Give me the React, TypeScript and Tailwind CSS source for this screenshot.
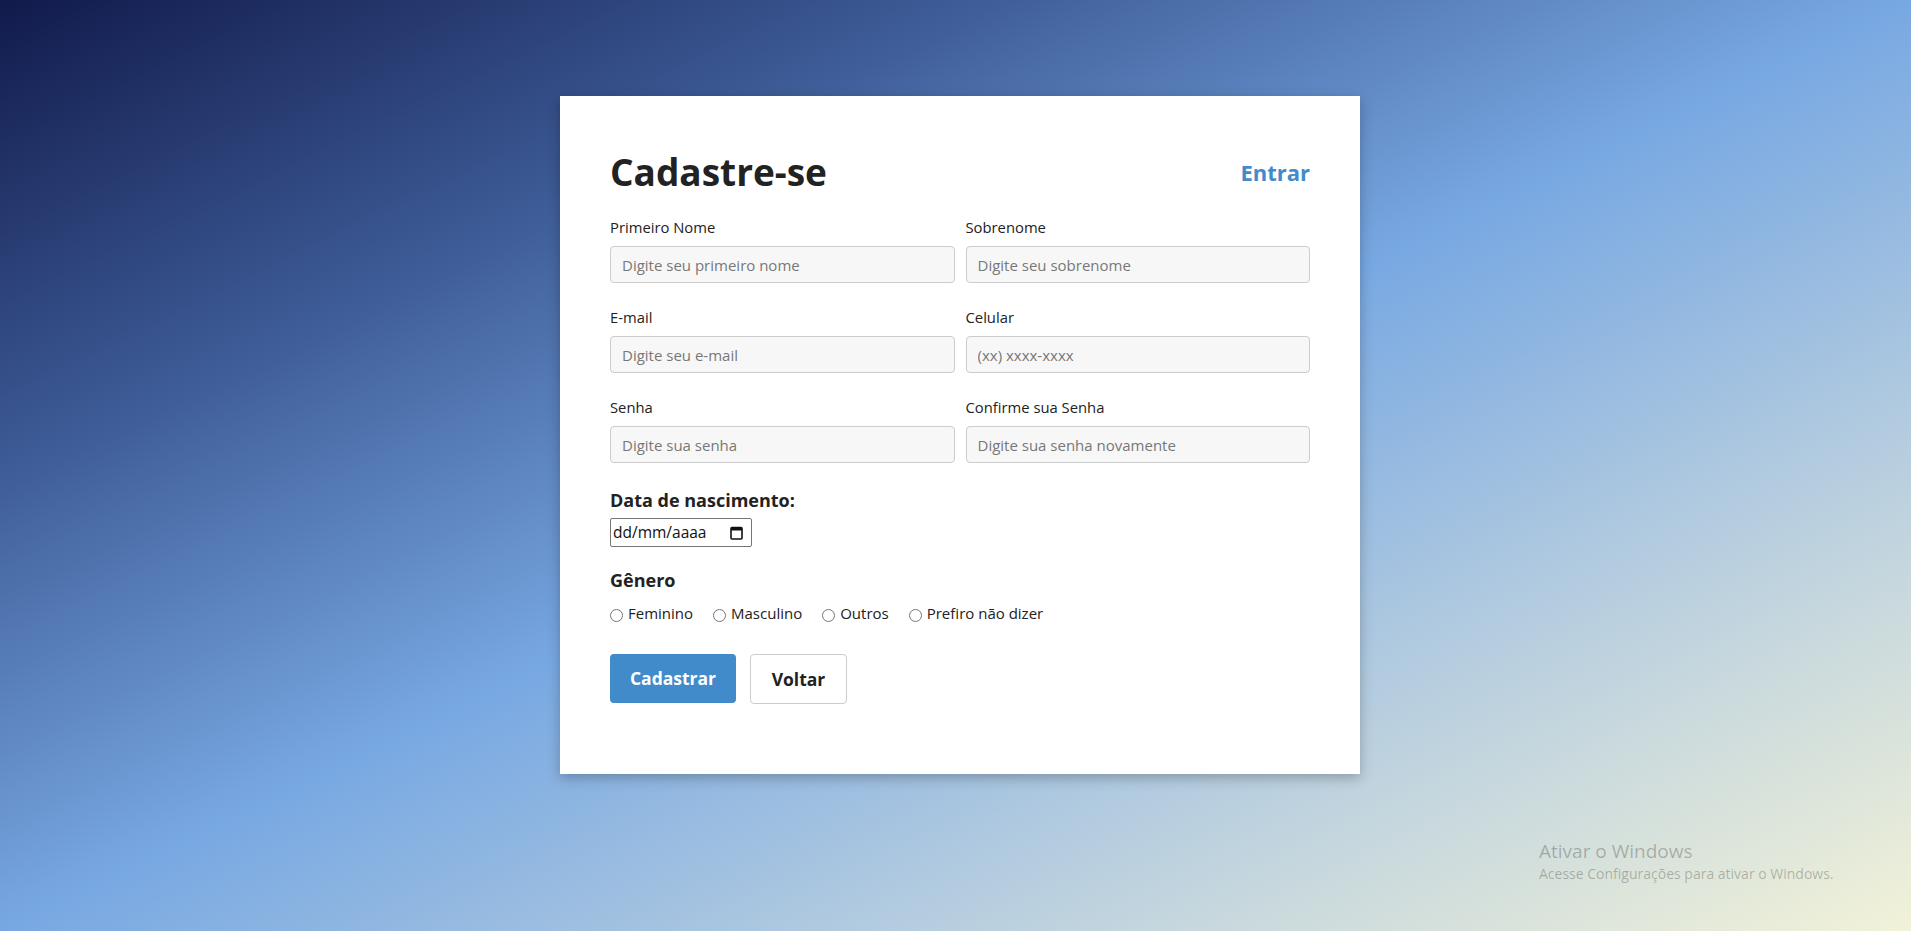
import { useState } from "react";

const fields = [
  [
    { id: "nome", label: "Primeiro Nome", placeholder: "Digite seu primeiro nome" },
    { id: "sobrenome", label: "Sobrenome", placeholder: "Digite seu sobrenome" },
  ],
  [
    { id: "email", label: "E-mail", placeholder: "Digite seu e-mail" },
    { id: "celular", label: "Celular", placeholder: "(xx) xxxx-xxxx" },
  ],
  [
    { id: "senha", label: "Senha", placeholder: "Digite sua senha" },
    { id: "confirma", label: "Confirme sua Senha", placeholder: "Digite sua senha novamente" },
  ],
];

const generos = ["Feminino", "Masculino", "Outros", "Prefiro não dizer"];

function CalendarGlyph() {
  return (
    <svg width="13" height="14" viewBox="0 0 13 14" className="shrink-0">
      <rect x="1" y="1.5" width="11" height="11.5" rx="1" fill="none" stroke="#111" strokeWidth="1.6" />
      <rect x="1" y="1.5" width="11" height="3" fill="#111" />
    </svg>
  );
}

export default function App() {
  const [genero, setGenero] = useState<string | null>(null);

  return (
    <div className="relative min-h-[931px] w-full overflow-hidden bg-[linear-gradient(to_bottom_right,#111a4b_0%,#3d5b96_25%,#78a8e2_50%,#b9cfdf_75%,#f2f2d8_100%)] font-['Open_Sans',sans-serif]">
      <div className="flex justify-center pl-[9px] pt-[96px]">
        <div className="w-[800px] bg-white px-[50px] pb-[70px] pt-[52px] shadow-[0_4px_12px_rgba(0,0,0,0.25)]">
          <div className="flex items-center justify-between">
            <h1 className="text-[37px] font-bold leading-[48px] text-[#222]">Cadastre-se</h1>
            <a href="#" className="text-[22px] font-bold text-[#428bca]">Entrar</a>
          </div>

          <div className="mt-[21px] flex flex-col gap-[24px]">
            {fields.map((row, i) => (
              <div key={i} className="grid grid-cols-2 gap-[11px]">
                {row.map((f) => (
                  <div key={f.id} className="flex flex-col gap-[9px]">
                    <label htmlFor={f.id} className="text-[14.8px] leading-[20px] text-[#222]">
                      {f.label}
                    </label>
                    <input
                      id={f.id}
                      placeholder={f.placeholder}
                      className="h-[37px] rounded-[4px] border border-[#ccc] bg-[#f7f7f7] px-[11px] text-[15px] text-[#222] outline-none placeholder:text-[#777]"
                    />
                  </div>
                ))}
              </div>
            ))}
          </div>

          <div className="mt-[25px] text-[18px] font-bold leading-[24px] text-[#222]">Data de nascimento:</div>
          <div className="mt-[6px] flex h-[29px] w-[142px] items-center justify-between rounded-[2px] border border-[#767676] pl-[2px] pr-[8px] text-[15.5px] text-[#111]">
            <span>dd/mm/aaaa</span>
            <CalendarGlyph />
          </div>

          <div className="mt-[21px] text-[18px] font-bold leading-[24px] text-[#222]">Gênero</div>
          <div className="mt-[11px] flex items-center gap-[20px] text-[15px] leading-[20px] text-[#222]">
            {generos.map((g) => (
              <label key={g} className="flex cursor-pointer items-center gap-[5px]" onClick={() => setGenero(g)}>
                <span className="mt-[4px] flex h-[13px] w-[13px] items-center justify-center rounded-full border border-[#767676] bg-white">
                  {genero === g && <span className="h-[7px] w-[7px] rounded-full bg-[#0075ff]" />}
                </span>
                {g}
              </label>
            ))}
          </div>

          <div className="mt-[31px] flex gap-[14px]">
            <button className="h-[49px] w-[126px] rounded-[4px] bg-[#428bca] text-[17.5px] font-bold text-white">
              Cadastrar
            </button>
            <button className="h-[50px] w-[97px] rounded-[4px] border border-[#ccc] bg-white text-[17.5px] font-bold text-[#222]">
              Voltar
            </button>
          </div>
        </div>
      </div>

      <div className="pointer-events-none absolute left-[1539px] top-[838px] font-['Open_Sans',sans-serif] text-black/25">
        <div className="text-[19px] leading-[26px]">Ativar o Windows</div>
        <div className="text-[14px] leading-[20px]">Acesse Configurações para ativar o Windows.</div>
      </div>
    </div>
  );
}
